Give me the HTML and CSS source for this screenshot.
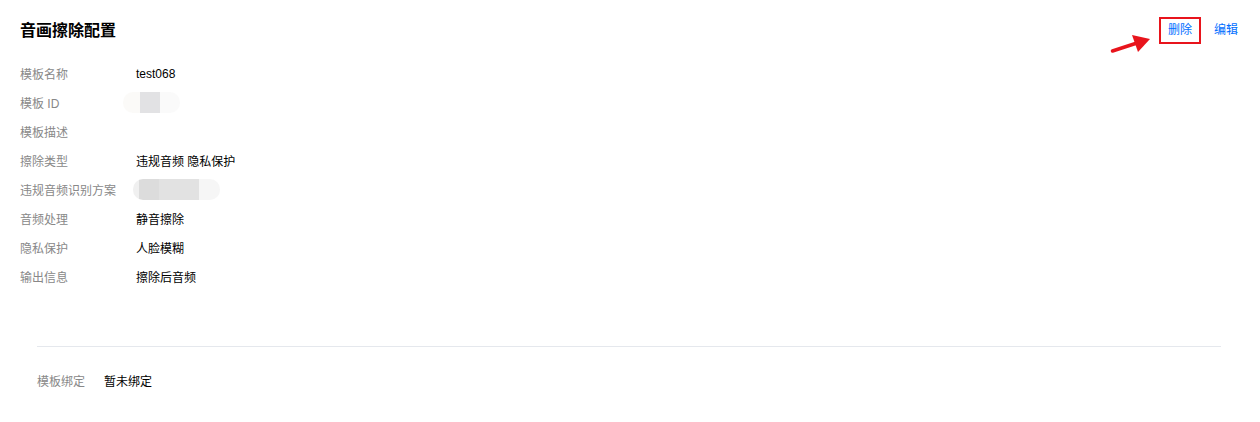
FILE: index.html
```html
<!DOCTYPE html>
<html lang="zh-CN">
<head>
<meta charset="utf-8">
<link rel="stylesheet" href="styles.css">
</head>
<body>
<div class="page">
  <div class="header">
    <h1 class="title">音画擦除配置</h1>
    <div class="actions">
      <svg class="arrow" width="44" height="24" viewBox="0 0 44 24">
        <line x1="3.5" y1="20" x2="28" y2="12" stroke="#e8141c" stroke-width="3.5" stroke-linecap="round"/>
        <polygon points="41,8 23,4 29,21" fill="#e8141c"/>
      </svg>
      <a class="link del">删除</a>
      <a class="link">编辑</a>
    </div>
  </div>
  <div class="info">
    <div class="label">模板名称</div><div class="value">test068</div>
    <div class="label">模板 ID</div><div class="value"><span class="blur blur-a"></span></div>
    <div class="label">模板描述</div><div class="value"></div>
    <div class="label">擦除类型</div><div class="value">违规音频 隐私保护</div>
    <div class="label">违规音频识别方案</div><div class="value"><span class="blur blur-b"></span></div>
    <div class="label">音频处理</div><div class="value">静音擦除</div>
    <div class="label">隐私保护</div><div class="value">人脸模糊</div>
    <div class="label">输出信息</div><div class="value">擦除后音频</div>
  </div>
  <div class="bind">
    <div class="bind-row">
      <span class="label">模板绑定</span><span class="value">暂未绑定</span>
    </div>
  </div>
</div>
</body>
</html>
```

FILE: styles.css
```css
* { box-sizing: border-box; }
html, body { margin: 0; padding: 0; background: #fff; }
body {
  font-family: "Liberation Sans", "Noto Sans CJK SC", sans-serif;
  font-size: 12px;
  color: #000;
}
.page { padding: 18px 22px 0 20px; }
.header {
  display: flex;
  justify-content: space-between;
  align-items: flex-start;
  height: 41px;
}
.title {
  margin: 0;
  font-size: 16px;
  line-height: 26px;
  font-weight: 700;
  color: #000;
}
.actions {
  display: flex;
  align-items: center;
  position: relative;
  margin-top: -1px;
}
.arrow {
  position: absolute;
  left: -50px;
  top: 14px;
}
.link {
  color: #006eff;
  font-size: 12px;
  line-height: 23px;
  cursor: pointer;
}
.del {
  border: 2px solid #e8141c;
  padding: 0 7px;
  margin-right: 13px;
}
.info {
  display: grid;
  grid-template-columns: 116px 1fr;
  grid-auto-rows: 29px;
  align-items: center;
}
.label { color: #888; }
.value { color: #000; display: flex; align-items: center; }
.blur { display: block; position: relative; height: 21px; border-radius: 10px; }
.blur-a {
  width: 57px;
  margin-left: -13px;
  background: linear-gradient(90deg, #fbfaf8 0 17px, #e2e2e4 17px 37px, #fafafa 37px);
}
.blur-b {
  width: 87px;
  margin-left: -3px;
  background: linear-gradient(90deg, #f0f0f0 0 6px, #dcdcdc 6px 26px, #e2e2e2 26px 66px, #f6f6f6 66px);
}
.bind {
  margin: 55px 17px 0 17px;
  border-top: 1px solid #e5e8ed;
  padding-top: 25px;
}
.bind-row { display: flex; line-height: 20px; }
.bind-row .label { width: 67px; }
```
